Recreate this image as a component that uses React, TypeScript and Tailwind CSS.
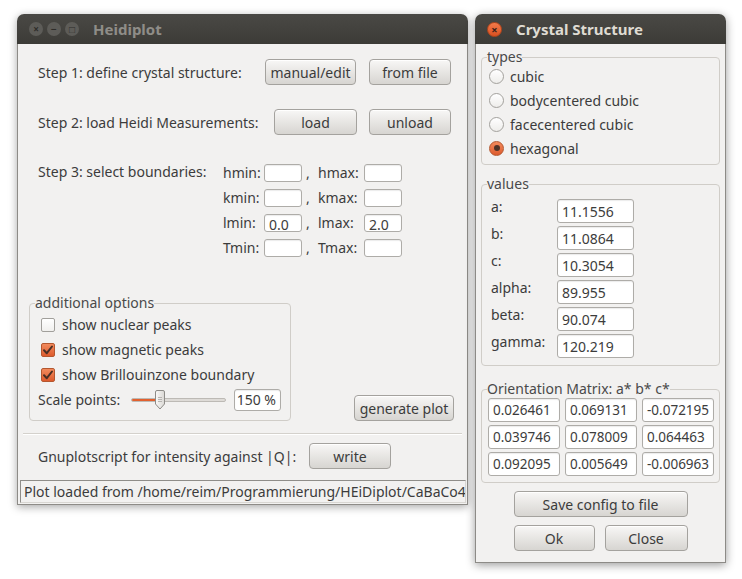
import type { ReactNode } from 'react'

const txt = "text-[#3c3c3c]"

function Btn({ children, className = '' }: { children: ReactNode; className?: string }) {
  return (
    <div
      className={`flex items-center justify-center h-[26px] rounded-[4px] border border-[#a4a29e] bg-linear-to-b from-[#f8f7f6] to-[#d7d5d1] shadow-[inset_0_1px_0_rgba(255,255,255,0.9)] ${txt} ${className}`}
    >
      {children}
    </div>
  )
}

function Field({ value = '', className = '', right = false }: { value?: string; className?: string; right?: boolean }) {
  return (
    <div
      className={`flex items-center bg-white border border-[#aeaca8] rounded-[3px] shadow-[inset_0_1px_1px_rgba(0,0,0,0.08)] px-[4px] overflow-hidden whitespace-nowrap ${right ? 'justify-end' : ''} ${txt} ${className}`}
    >
      {value}
    </div>
  )
}

function Checkbox({ checked }: { checked: boolean }) {
  if (!checked) {
    return <div className="w-[14px] h-[14px] rounded-[2px] border border-[#a19f9b] bg-linear-to-b from-white to-[#f1f0ee]" />
  }
  return (
    <div className="w-[14px] h-[14px] rounded-[2px] border border-[#b4572f] bg-linear-to-b from-[#f28a5c] to-[#dd5a2c] flex items-center justify-center">
      <svg width="12" height="12" viewBox="0 0 12 12">
        <path d="M2 6.2 L4.8 9.2 L10 2.5" fill="none" stroke="#4a2f24" strokeWidth="2" strokeLinecap="round" strokeLinejoin="round" />
      </svg>
    </div>
  )
}

function Radio({ checked }: { checked: boolean }) {
  if (!checked) {
    return <div className="w-[15px] h-[15px] rounded-full border border-[#a3a19d] bg-linear-to-b from-white to-[#eeedeb]" />
  }
  return (
    <div className="w-[15px] h-[15px] rounded-full border border-[#b4572f] bg-linear-to-b from-[#f28a5c] to-[#dd5a2c] flex items-center justify-center">
      <div className="w-[6px] h-[6px] rounded-full bg-[#4d3328]" />
    </div>
  )
}

function Group({ label, children, className = '' }: { label: string; children: ReactNode; className?: string }) {
  return (
    <fieldset className={`border border-[#d0cdc8] rounded-[4px] ${className}`}>
      <legend className="ml-[5px] px-0 leading-[14px] text-[#4a4a4a]">{label}</legend>
      {children}
    </fieldset>
  )
}

function HeidiplotWindow() {
  const bounds = [
    ['hmin:', '', 'hmax:', ''],
    ['kmin:', '', 'kmax:', ''],
    ['lmin:', '0.0', 'lmax:', '2.0'],
    ['Tmin:', '', 'Tmax:', ''],
  ]
  const options = [
    { label: 'show nuclear peaks', checked: false },
    { label: 'show magnetic peaks', checked: true },
    { label: 'show Brillouinzone boundary', checked: true },
  ]

  return (
    <div className="absolute left-[17px] top-[14px] w-[451px] h-[491px] flex flex-col rounded-t-[7px] shadow-[0_2px_8px_rgba(0,0,0,0.35)]">
      {/* title bar */}
      <div className="h-[30px] shrink-0 rounded-t-[7px] bg-linear-to-b from-[#4a4945] to-[#3c3b37] flex items-center pl-[12px]">
        <div className="flex gap-[4px]">
          {['×', '−', '□'].map((g) => (
            <div key={g} className="w-[14px] h-[14px] rounded-full bg-[#5d5c58] flex items-center justify-center text-[10px] leading-none text-[#2e2d2a] font-bold">
              {g}
            </div>
          ))}
        </div>
        <span className="ml-[14px] font-bold text-[#8f8d88] text-[15px]">Heidiplot</span>
      </div>

      {/* body */}
      <div className="flex-1 flex flex-col bg-[#f2f1f0] border-x border-b border-[#8d8b87] pt-[15px]">
        <div className="flex items-center h-[26px] pl-[20px] pr-[16px]">
          <span>Step 1: define crystal structure:</span>
          <div className="ml-auto flex gap-[13px]">
            <Btn className="w-[91px]">manual/edit</Btn>
            <Btn className="w-[82px]">from file</Btn>
          </div>
        </div>

        <div className="flex items-center h-[26px] mt-[24px] pl-[20px] pr-[16px]">
          <span>Step 2: load Heidi Measurements:</span>
          <div className="ml-auto flex gap-[12px]">
            <Btn className="w-[83px]">load</Btn>
            <Btn className="w-[82px]">unload</Btn>
          </div>
        </div>

        <div className="flex mt-[29px] pl-[20px]">
          <span className="w-[185px] h-[18px] leading-[16px]">Step 3: select boundaries:</span>
          <div className="grid grid-cols-[41px_38px_16px_46px_38px] gap-y-[7px] items-center">
            {bounds.map(([l1, v1, l2, v2]) => (
              <div key={l1} className="contents">
                <span className="leading-[16px]">{l1}</span>
                <Field value={v1} className="h-[18px] leading-[18px] pt-[3px]" />
                <span className="pl-[4px] leading-[16px]">,</span>
                <span className="leading-[16px]">{l2}</span>
                <Field value={v2} className="h-[18px] leading-[18px] pt-[3px]" />
              </div>
            ))}
          </div>
        </div>

        <div className="flex items-end mt-[39px] pl-[11px] pr-[13px]">
          <Group label="additional options" className="w-[262px] pb-[8px]">
            <div className="pt-[2px]">
              {options.map((o) => (
                <div key={o.label} className="flex items-center h-[25px] pl-[11px] gap-[7px]">
                  <Checkbox checked={o.checked} />
                  <span>{o.label}</span>
                </div>
              ))}
              <div className="flex items-center h-[25px] pl-[8px]">
                <span className="w-[93px]">Scale points:</span>
                <div className="relative w-[95px] h-[20px] flex items-center">
                  <div className="w-full h-[4px] rounded-full bg-[#dedbd7] border border-[#bdbab5] overflow-hidden">
                    <div className="w-[28px] h-full bg-[#e2612f]" />
                  </div>
                  <svg className="absolute left-[23px] top-[0px]" width="12" height="20" viewBox="0 0 12 20">
                    <defs>
                      <linearGradient id="th" x1="0" y1="0" x2="1" y2="0">
                        <stop offset="0" stopColor="#fbfaf9" />
                        <stop offset="1" stopColor="#d9d7d3" />
                      </linearGradient>
                    </defs>
                    <path d="M1.5 2 Q1.5 0.5 3 0.5 L9 0.5 Q10.5 0.5 10.5 2 L10.5 14 L6 19 L1.5 14 Z" fill="url(#th)" stroke="#8e8c88" />
                    <path d="M4 7.5 H8 M4 9.5 H8 M4 11.5 H8" stroke="#a9a7a3" strokeWidth="0.8" />
                  </svg>
                </div>
                <Field value="150 %" right className="ml-[8px] w-[47px] h-[22px]" />
              </div>
            </div>
          </Group>
          <Btn className="ml-auto w-[100px]">generate plot</Btn>
        </div>

        <div className="mt-[12px] mx-[5px] h-[2px] border-t border-[#d4d1cc] border-b-white border-b" />

        <div className="flex items-center h-[26px] mt-[8px] pl-[20px]">
          <span className="w-[271px]">Gnuplotscript for intensity against |Q|:</span>
          <Btn className="w-[82px]">write</Btn>
        </div>

        <div className="mt-[11px] ml-[2px] mr-[1px] h-[23px] border border-t-[#8f8d89] border-l-[#8f8d89] border-r-[#d8d6d2] border-b-[#d8d6d2] flex items-center pl-[3px] overflow-hidden whitespace-nowrap">
          Plot loaded from /home/reim/Programmierung/HEiDiplot/CaBaCo4O7/data
        </div>
      </div>
    </div>
  )
}

function CrystalWindow() {
  const types = [
    { label: 'cubic', checked: false },
    { label: 'bodycentered cubic', checked: false },
    { label: 'facecentered cubic', checked: false },
    { label: 'hexagonal', checked: true },
  ]
  const values = [
    ['a:', '11.1556'],
    ['b:', '11.0864'],
    ['c:', '10.3054'],
    ['alpha:', '89.955'],
    ['beta:', '90.074'],
    ['gamma:', '120.219'],
  ]
  const matrix = [
    '0.026461', '0.069131', '-0.072195',
    '0.039746', '0.078009', '0.064463',
    '0.092095', '0.005649', '-0.006963',
  ]

  return (
    <div className="absolute left-[475px] top-[14px] w-[251px] h-[549px] flex flex-col rounded-t-[7px] shadow-[0_2px_10px_rgba(0,0,0,0.4)]">
      <div className="h-[30px] shrink-0 rounded-t-[7px] bg-linear-to-b from-[#4a4945] to-[#3c3b37] flex items-center pl-[12px]">
        <div className="w-[15px] h-[15px] rounded-full bg-linear-to-b from-[#f37a4a] to-[#d9501f] border border-[#b4461c] flex items-center justify-center text-[11px] leading-none font-bold text-[#3a2119]">
          ×
        </div>
        <span className="ml-[14px] font-bold text-[#dfdbd2] text-[15px]">Crystal Structure</span>
      </div>

      <div className="flex-1 flex flex-col bg-[#f2f1f0] border-x border-b border-[#8d8b87] px-[5px] pt-[6px]">
        <Group label="types" className="pb-[4px]">
          {types.map((t) => (
            <div key={t.label} className="flex items-center h-[24px] pl-[7px] gap-[6px]">
              <Radio checked={t.checked} />
              <span>{t.label}</span>
            </div>
          ))}
        </Group>

        <Group label="values" className="mt-[12px] pt-[8px] pb-[7px]">
          <div className="grid grid-cols-[66px_77px] gap-y-[3px] pl-[9px]">
            {values.map(([l, v]) => (
              <div key={l} className="contents">
                <span className="h-[24px] leading-[16px]">{l}</span>
                <Field value={v} className="h-[24px]" />
              </div>
            ))}
          </div>
        </Group>

        <Group label="Orientation Matrix: a* b* c*" className="mt-[16px] pb-[6px]">
          <div className="grid grid-cols-3 gap-x-[5px] gap-y-[3px] pt-[2px] pl-[6px] pr-[5px] text-[13.5px]">
            {matrix.map((m, i) => (
              <Field key={i} value={m} className="h-[24px] px-[3px]" />
            ))}
          </div>
        </Group>

        <div className="flex justify-center mt-[8px]">
          <Btn className="w-[174px]">Save config to file</Btn>
        </div>
        <div className="flex justify-center gap-[10px] mt-[8px]">
          <Btn className="w-[81px]">Ok</Btn>
          <Btn className="w-[83px]">Close</Btn>
        </div>
      </div>
    </div>
  )
}

export default function App() {
  return (
    <div className={`relative w-[742px] h-[579px] bg-white overflow-hidden font-['Noto_Sans',sans-serif] text-[14px] ${txt}`}>
      <HeidiplotWindow />
      <CrystalWindow />
    </div>
  )
}
